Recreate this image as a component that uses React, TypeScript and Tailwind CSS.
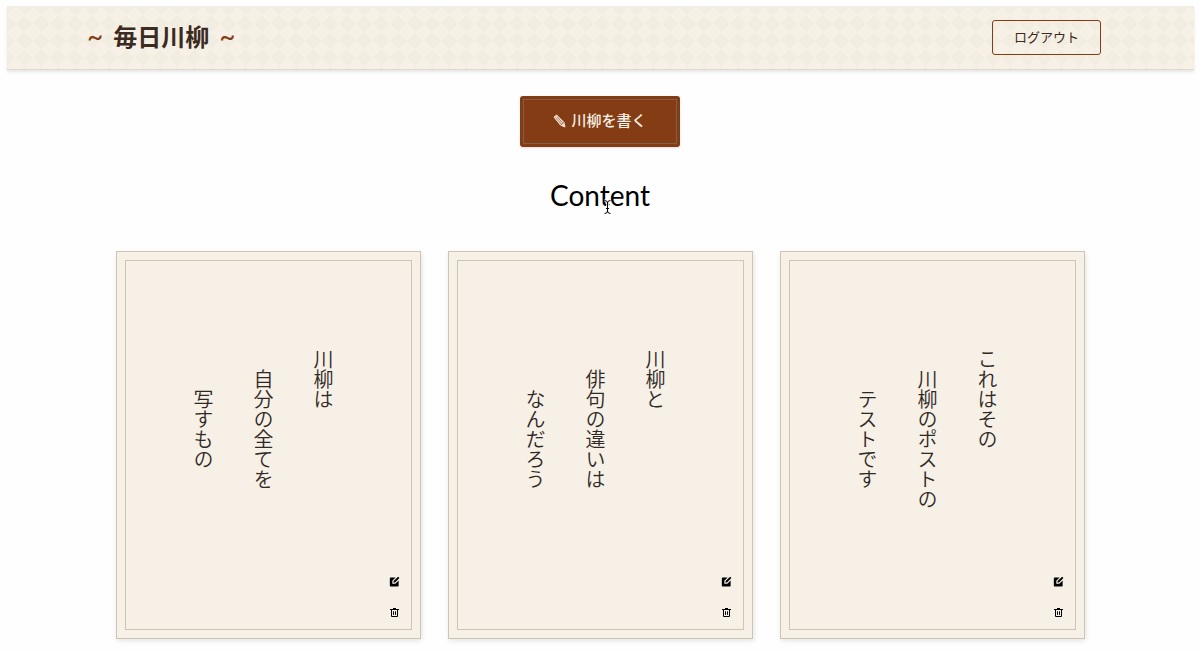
const posts = [
  ["川柳は", "自分の全てを", "写すもの"],
  ["川柳と", "俳句の違いは", "なんだろう"],
  ["これはその", "川柳のポストの", "テストです"],
];

const lineOffsets = ["mt-0", "mt-5", "mt-10"];

function Tilde() {
  return <span className="font-['Lato',sans-serif] text-[28px] font-normal text-[#843c14]">~</span>;
}

function PencilIcon() {
  return (
    <svg viewBox="0 0 13 14" className="h-[14px] w-[13px]" aria-hidden="true">
      <path d="M1 3.2 3.6 1 10.9 8.3 12 13 7.6 11.2Z" fill="#e9dccd" stroke="#f7f0e6" strokeWidth=".9" strokeLinejoin="round" />
      <path d="M2.5 3.6 8.4 10.4M3.9 2.6 10 9.3M7.6 11.2 10.9 8.3" fill="none" stroke="#843c14" strokeWidth=".6" />
    </svg>
  );
}

function EditIcon() {
  return (
    <svg viewBox="0 0 20 20" className="h-[11px] w-[11px]" aria-hidden="true">
      <path d="M3 2.5h9L6 8.500v5.500h5.500L17.500 8v9.500a1.500 1.500 0 0 1-1.500 1.500H3A1.500 1.500 0 0 1 1.500 17.500V4A1.500 1.500 0 0 1 3 2.500Z" fill="currentColor" />
      <path d="m8 12 .4-2.700L16.500 1.200 19 3.700l-8.200 8Z" fill="currentColor" />
    </svg>
  );
}

function TrashIcon() {
  return (
    <svg viewBox="0 0 11 11" className="h-[11px] w-[11px]" fill="none" stroke="currentColor" aria-hidden="true">
      <path d="M1 2.500h9M4 1.500h3M2.500 2.500v7h6v-7M4.500 4.300v3.600M6.500 4.300v3.600" />
    </svg>
  );
}

function TextCursor() {
  return (
    <svg viewBox="0 0 9 16" className="absolute top-6 left-[53px] h-4 w-[9px]" fill="none" aria-hidden="true">
      <path d="M1.500 1.500q3 0 3 2.500 0-2.500 3-2.500M4.500 3.500v9.500M1.500 14.500q3 0 3-2.500 0 2.500 3 2.500M3 9.500h3" stroke="white" strokeWidth="2.600" />
      <path d="M1.500 1.500q3 0 3 2.500 0-2.500 3-2.500M4.500 3.500v9.500M1.500 14.500q3 0 3-2.500 0 2.500 3 2.500M3 9.500h3" stroke="black" />
    </svg>
  );
}

function Header() {
  return (
    <header className="mt-[6px] mr-[6px] ml-[7px] flex h-16 items-center justify-between border-b border-[#e3dacb] bg-[#f7f0e6] bg-[conic-gradient(from_45deg_at_50%_50%,#f1ede0_25%,#f7f0e6_0_50%,#f1ede0_0_75%,#f7f0e6_0)] bg-[length:17px_17px] bg-[position:0px_9px] pr-[93px] pl-20 shadow-[0_2px_3px_rgba(0,0,0,0.1)]">
      <h1 className="flex items-center gap-[10px] pb-1 text-2xl leading-8 font-bold text-[#3b2a22]">
        <Tilde />
        毎日川柳
        <Tilde />
      </h1>
      <button className="h-[35px] rounded-[3px] border border-[#843c14] px-[21px] pb-[2px] text-[13px] text-[#3b2a22]">
        ログアウト
      </button>
    </header>
  );
}

function PostCard({ lines }: { lines: string[] }) {
  return (
    <article className="border border-[#cfc3b2] bg-[#f7f0e6] p-2 shadow-[1px_2px_5px_rgba(0,0,0,0.1)]">
      <div className="relative flex h-[370px] flex-row-reverse justify-center gap-10 border border-[#cfc3b2] pt-[88px] pr-[10px]">
        {lines.map((line, i) => (
          <p
            key={line}
            className={`text-xl leading-5 font-[350] text-[#2f2925] [writing-mode:vertical-rl] ${lineOffsets[i]}`}
          >
            {line}
          </p>
        ))}
        <div className="absolute right-[11px] bottom-[11px] flex flex-col gap-5 text-black">
          <button aria-label="編集">
            <EditIcon />
          </button>
          <button aria-label="削除">
            <TrashIcon />
          </button>
        </div>
      </div>
    </article>
  );
}

export default function App() {
  return (
    <div className="flow-root min-h-screen bg-[#fefefe] font-['Noto_Sans_CJK_JP',sans-serif]">
      <Header />
      <main className="flex flex-col items-center">
        <button className="mt-[26px] rounded-[3px] bg-[#843c14] p-[3px] text-[15px] font-medium text-[#f7f0e6] shadow-sm">
          <span className="flex h-[45px] items-center gap-[5px] border border-[#7f5f48] px-[29px] pb-[2px]">
            <PencilIcon />
            川柳を書く
          </span>
        </button>
        <h2 className="relative mt-7 font-['Lato',sans-serif] text-[28px] leading-10 text-black">
          Content
          <TextCursor />
        </h2>
        <section className="mt-9 grid w-full max-w-[969px] grid-cols-3 gap-[27px]">
          {posts.map((lines) => (
            <PostCard key={lines[1]} lines={lines} />
          ))}
        </section>
      </main>
    </div>
  );
}
